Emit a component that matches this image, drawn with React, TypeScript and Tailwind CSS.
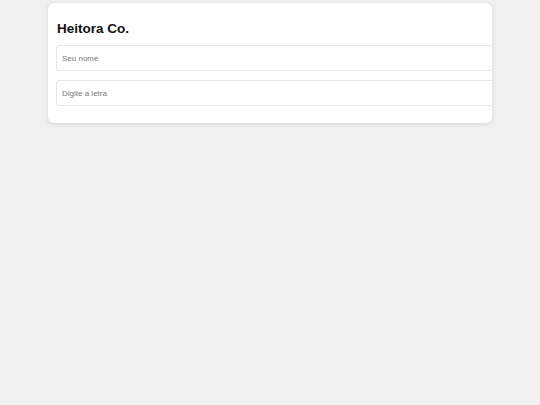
import React from 'react';

const FIELDS = ['Seu nome', 'Digite a letra'];

export default function App() {
    return (
        <div className="min-h-[405px] w-full bg-[#f0f0f0] pt-[3px] font-['Liberation_Sans',Arial,sans-serif]">
            {/* Card */}
            <div className="mx-auto w-[444px] overflow-hidden rounded-[6px] bg-white px-2 pt-[18px] pb-[17px] shadow-[0_1px_4px_rgba(0,0,0,0.12)]">
                <h1 className="pl-px text-[13.5px] font-bold leading-[16px] text-[#111]">Heitora Co.</h1>
                <div className="mt-2 flex flex-col gap-[9px]">
                    {FIELDS.map((label) => (
                        <input
                            key={label}
                            type="text"
                            placeholder={label}
                            className="box-content h-6 w-full rounded-[3px] border border-[#e6e6e6] px-[5px] text-[8px] text-[#333] outline-none placeholder:text-[#777]"
                        />
                    ))}
                </div>
            </div>
        </div>
    );
}
